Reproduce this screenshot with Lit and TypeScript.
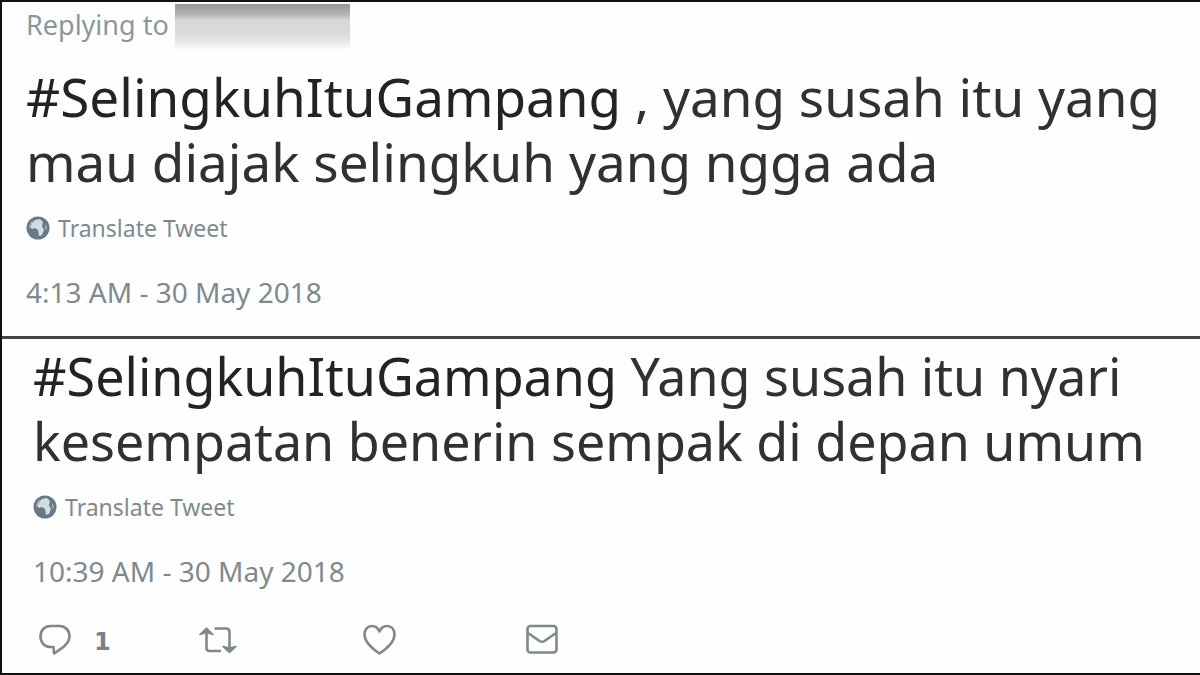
import { LitElement, html, css, svg } from 'lit';
import { customElement, property } from 'lit/decorators.js';

const globe = svg`<svg class="globe" viewBox="0 0 24 24" aria-hidden="true">
  <circle cx="12" cy="12" r="11.5" fill="#657986"/>
  <path d="M9 4l5-1 3 3-1 4 2 4-2 5-3 1-1-6-3-2-3 1-2-2 2-4z" fill="#d3dce1"/>
  <path d="M4 7l3-3-2 7-2 1zM19 8l2 3-1 4-1-3z" fill="#a3b0b8"/>
</svg>`;

@customElement('tweet-body')
export class TweetBody extends LitElement {
  @property() lineOne = '';
  @property() lineTwo = '';
  @property() time = '';

  static styles = css`
    :host { display: block; }
    .text { margin: 0; font-size: inherit; line-height: 65px; font-weight: 400; color: #2f3133; white-space: nowrap; }
    .tag { color: #222324; text-decoration: none; }
    .translate { display: flex; align-items: center; gap: 8px; margin: 18px 0 0; padding: 0; border: 0; background: none; font-family: inherit; font-size: 23px; line-height: 32px; color: #7d8b91; cursor: pointer; }
    .globe { width: 24px; height: 24px; }
    .time { display: block; margin-top: 32px; font-size: 28px; line-height: 32px; color: #7f8a8f; }
  `;

  render() {
    return html`
      <p class="text"><a class="tag" href="#SelingkuhItuGampang">#SelingkuhItuGampang</a> ${this.lineOne}<br>${this.lineTwo}</p>
      <button class="translate" type="button">${globe}<span>Translate Tweet</span></button>
      <time class="time">${this.time}</time>
    `;
  }
}

@customElement('tweet-actions')
export class TweetActions extends LitElement {
  static styles = css`
    :host { display: grid; grid-template-columns: repeat(4, 163px); }
    .action { display: flex; align-items: center; gap: 20px; padding: 0; border: 0; background: none; color: #7f888b; cursor: pointer; }
    .icon { width: 38px; height: 36px; fill: none; stroke: currentColor; stroke-width: 2.6; stroke-linejoin: round; }
    .count { padding-top: 4px; font: bold 24px/32px "DejaVu Sans", sans-serif; color: #73838c; }
  `;

  render() {
    return html`
      <button class="action" type="button" aria-label="Reply, 1">
        <svg class="icon" viewBox="0 0 38 36"><path d="M14.500 4h9c6 0 10 4.500 10 10.500 0 4-2 6.500-5 9.500-3 2.500-6 4.500-10.500 7.500l-.5-6.500h-3c-6 0-10-4.500-10-10.500S8.500 4 14.500 4z"/></svg>
        <span class="count">1</span>
      </button>
      <button class="action" type="button" aria-label="Retweet">
        <svg class="icon" viewBox="0 0 38 36"><path d="M7.500 9v17q0 3 3 3H22M15.500 6.500H27q3.500 0 3.500 3.500v17"/><path d="M1 12.500L7.500 6l6.500 6.500-6.500-2zM24 24.500l6.500 6 6.500-6-6.500 1.500z" fill="currentColor" stroke-width="1.500"/></svg>
      </button>
      <button class="action" type="button" aria-label="Like">
        <svg class="icon" viewBox="0 0 38 36"><path d="M17.500 31.500C10 26.500 2.500 20 2.500 12.500c0-5 3-8.500 7.500-8.500 3.500 0 6 2 7.500 5.500C19 6 21.500 4 25 4c4.500 0 7.500 3.500 7.500 8.500 0 7.500-7.500 14-15 19z"/></svg>
      </button>
      <button class="action" type="button" aria-label="Direct message">
        <svg class="icon" viewBox="0 0 38 36"><rect x="2.500" y="4" width="29" height="26.500" rx="3"/><path d="M3 11l11.500 8q2.500 1.500 5 0L31 11"/></svg>
      </button>
    `;
  }
}

@customElement('app-root')
export class AppRoot extends LitElement {
  static styles = css`
    :host { display: block; box-sizing: border-box; min-height: 100vh; border: 2px solid #111; border-right: 0; background: #fefefe; font-family: "Noto Sans", sans-serif; overflow: hidden; }
    .first { padding: 0 24px 28px; border-bottom: 3px solid #444; font-size: 53px; }
    .second { padding: 4px 31px 12px; font-size: 52px; }
    .reply { display: flex; align-items: center; gap: 6px; margin-bottom: 15px; padding-top: 2px; font-size: 27px; line-height: 40px; color: #8a989d; }
    .reply-label { padding-bottom: 4px; }
    .hidden-name { width: 175px; height: 45px; background: linear-gradient(#969696, #b8b8b8 25%, #d8d8d8 36%, #dadada 65%, #e8e8e8 85%, #fafafa); }
    .actions { margin: 35px 0 0 3px; }
  `;

  render() {
    return html`
      <article class="first">
        <div class="reply"><span class="reply-label">Replying to</span><span class="hidden-name"></span></div>
        <tweet-body .lineOne=${', yang susah itu yang'} .lineTwo=${'mau diajak selingkuh yang ngga ada'} .time=${'4:13 AM - 30 May 2018'}></tweet-body>
      </article>
      <article class="second">
        <tweet-body .lineOne=${'Yang susah itu nyari'} .lineTwo=${'kesempatan benerin sempak di depan umum'} .time=${'10:39 AM - 30 May 2018'}></tweet-body>
        <tweet-actions class="actions"></tweet-actions>
      </article>
    `;
  }
}
